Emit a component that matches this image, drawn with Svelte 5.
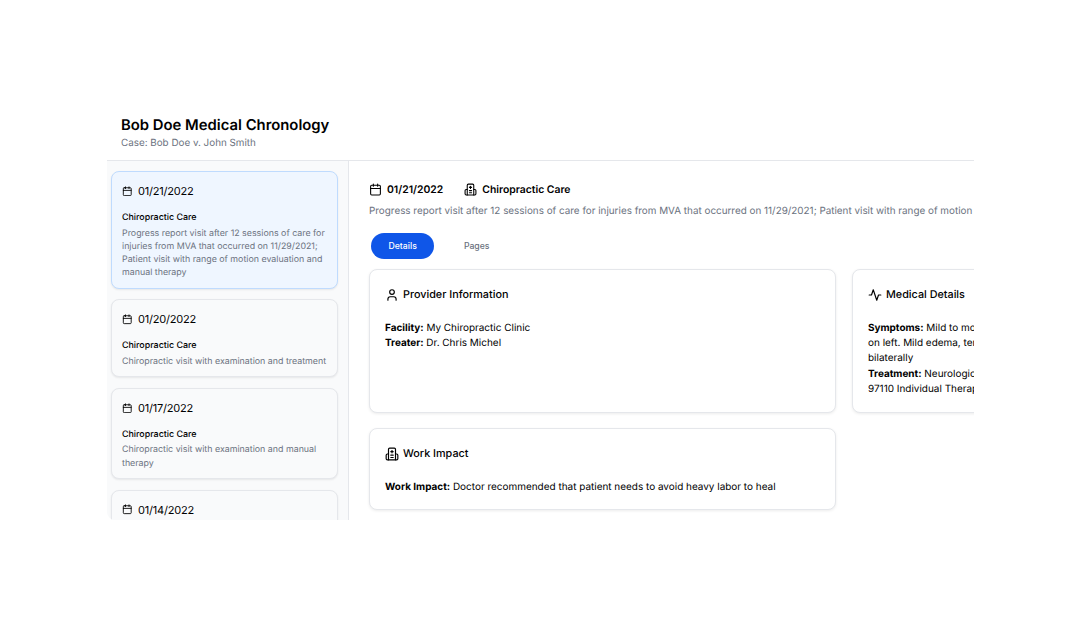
<script lang="ts">
  const visits = [
    { date: '01/21/2022', desc: 'Progress report visit after 12 sessions of care for injuries from MVA that occurred on 11/29/2021; Patient visit with range of motion evaluation and manual therapy', active: true },
    { date: '01/20/2022', desc: 'Chiropractic visit with examination and treatment' },
    { date: '01/17/2022', desc: 'Chiropractic visit with examination and manual therapy' },
    { date: '01/14/2022', desc: 'Chiropractic visit with examination and treatment' }
  ];
</script>

{#snippet calendar(size)}
  <svg class="icon" width={size} height={size} viewBox="0 0 24 24"><path d="M8 2v4M16 2v4"/><rect x="3" y="4" width="18" height="18" rx="2"/><path d="M3 10h18"/></svg>
{/snippet}

{#snippet hospital(size)}
  <svg class="icon" width={size} height={size} viewBox="0 0 24 24"><path d="M12 6v4"/><path d="M14 14h-4"/><path d="M14 18h-4"/><path d="M14 8h-4"/><path d="M18 12h2a2 2 0 0 1 2 2v6a2 2 0 0 1-2 2H4a2 2 0 0 1-2-2v-6a2 2 0 0 1 2-2h2"/><path d="M18 22V4a2 2 0 0 0-2-2H8a2 2 0 0 0-2 2v18"/></svg>
{/snippet}

<div class="page">
  <div class="shell">
    <header class="head">
      <h1>Bob Doe Medical Chronology</h1>
      <p>Case: Bob Doe v. John Smith</p>
    </header>
    <div class="body">
      <aside class="side">
        {#each visits as v}
          <div class="visit" class:active={v.active}>
            <div class="visit-date">{@render calendar(10.5)}<span>{v.date}</span></div>
            <div class="visit-type">Chiropractic Care</div>
            <div class="visit-desc">{v.desc}</div>
          </div>
        {/each}
      </aside>
      <main class="main">
        <div class="meta">
          <span class="meta-item">{@render calendar(13)}01/21/2022</span>
          <span class="meta-item">{@render hospital(13)}Chiropractic Care</span>
        </div>
        <p class="summary">Progress report visit after 12 sessions of care for injuries from MVA that occurred on 11/29/2021; Patient visit with range of motion evaluation and manual therapy</p>
        <div class="tabs">
          <button class="tab on">Details</button>
          <button class="tab">Pages</button>
        </div>
        <div class="grid">
          <section class="card">
            <h2><svg class="icon" width="14" height="14" viewBox="0 0 24 24"><path d="M19 21v-2a4 4 0 0 0-4-4H9a4 4 0 0 0-4 4v2"/><circle cx="12" cy="7" r="4"/></svg>Provider Information</h2>
            <p><b>Facility:</b> My Chiropractic Clinic</p>
            <p><b>Treater:</b> Dr. Chris Michel</p>
          </section>
          <section class="card">
            <h2><svg class="icon" width="14" height="14" viewBox="0 0 24 24"><path d="M22 12h-4l-3 9L9 3l-3 9H2"/></svg>Medical Details</h2>
            <p><b>Symptoms:</b> Mild to moderate neck and low back pain with stiffness and sharp pain, worse on left. Mild edema, tenderness to palpation with spasm of the cervical paraspinals bilaterally</p>
            <p><b>Treatment:</b> Neurological exam, 98941 Chiropractic Manipulation, 97140 Manual Traction, 97110 Individual Therapy</p>
          </section>
          <section class="card">
            <h2>{@render hospital(14)}Work Impact</h2>
            <p><b>Work Impact:</b> Doctor recommended that patient needs to avoid heavy labor to heal</p>
          </section>
        </div>
      </main>
    </div>
  </div>
</div>

<style>
  :global(body) {
    margin: 0;
    background: #fff;
    font-family: Inter, "Liberation Sans", sans-serif;
    color: #000;
    text-rendering: geometricPrecision;
  }
  .page {
    height: 643px;
    padding: 115px 106px 0 107px;
    box-sizing: border-box;
    overflow: hidden;
  }
  .shell {
    width: 867px;
    height: 405px;
    overflow: hidden;
    border-bottom-left-radius: 8px;
    display: flex;
    flex-direction: column;
  }
  .head {
    height: 45px;
    padding-left: 14px;
    border-bottom: 1px solid #e5e7eb;
    flex: none;
  }
  h1 {
    margin: 0;
    font-size: 14.85px;
    line-height: 20px;
    font-weight: 600;
  }
  .head p {
    margin: 0;
    font-size: 9.85px;
    line-height: 16px;
    color: #6b7280;
  }
  .body {
    flex: 1;
    min-height: 0;
    display: flex;
  }
  .side {
    width: 242px;
    flex: none;
    box-sizing: border-box;
    padding: 10px 10px 0 4px;
    background: #f9fafb;
    border-right: 1px solid #e5e7eb;
    overflow: hidden;
    display: flex;
    flex-direction: column;
    gap: 10.5px;
  }
  .visit {
    flex: none;
    padding: 10px 10px 8.25px;
    border-radius: 8px;
    background: #f9fafb;
    border: 1px solid #e5e7eb;
    box-shadow: 0 1px 2px rgba(0, 0, 0, 0.08);
  }
  .visit.active {
    background: #eff6ff;
    border-color: #bfdbfe;
  }
  .visit-date {
    display: flex;
    align-items: center;
    gap: 5.5px;
    font-size: 11px;
    letter-spacing: -0.2px;
    line-height: 18px;
    margin-bottom: 11px;
  }
  .visit-type {
    font-size: 8.9px;
    line-height: 14px;
    font-weight: 500;
    margin-bottom: 1.5px;
  }
  .visit-desc {
    font-size: 8.85px;
    line-height: 13.25px;
    color: #6b7280;
  }
  .icon {
    flex: none;
    fill: none;
    stroke: currentColor;
    stroke-width: 2;
    stroke-linecap: round;
    stroke-linejoin: round;
  }
  .main {
    flex: 1;
    min-width: 0;
    padding: 20px 0 0 20px;
    overflow: hidden;
  }
  .meta {
    display: flex;
    gap: 21px;
    height: 16px;
  }
  .meta-item {
    display: flex;
    align-items: center;
    gap: 5px;
    font-size: 10.4px;
    font-weight: 600;
  }
  .summary {
    margin: 6px 0 0;
    font-size: 9.89px;
    line-height: 16px;
    color: #6b7280;
    white-space: nowrap;
  }
  .tabs {
    display: flex;
    gap: 12px;
    margin: 14px 0 10px 2px;
  }
  .tab {
    height: 26px;
    padding: 0 17.5px;
    border: 0;
    border-radius: 13px;
    background: none;
    font: 500 8.7px Inter, sans-serif;
    color: #6b7280;
  }
  .tab.on {
    background: #0f56e8;
    color: #fff;
  }
  .grid {
    display: grid;
    grid-template-columns: 467px 467px;
    gap: 15px 16px;
  }
  .card {
    box-sizing: border-box;
    padding: 16px 15px 14.5px;
    border: 1px solid #e5e7eb;
    border-radius: 8px;
    background: #fff;
    box-shadow: 0 1px 3px rgba(0, 0, 0, 0.08);
  }
  h2 {
    display: flex;
    align-items: center;
    gap: 4px;
    margin: 0 0 16.5px;
    font-size: 10.8px;
    line-height: 18px;
    font-weight: 500;
  }
  .card p {
    margin: 0;
    font-size: 9.96px;
    line-height: 15.4px;
  }
  b {
    font-weight: 700;
  }
</style>
